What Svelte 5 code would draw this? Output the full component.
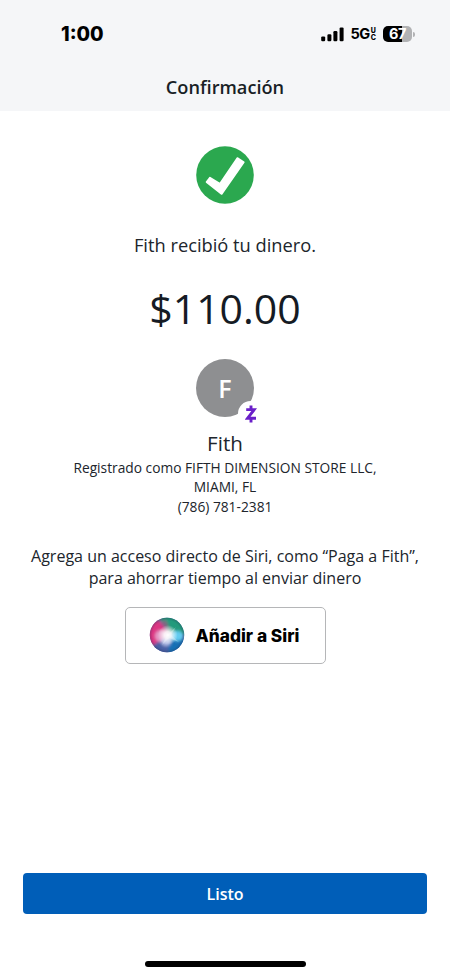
<script>
  const recipient = 'Fith';
  const amount = '$110.00';
</script>

<div class="screen">
  <header>
    <div class="status">
      <span class="time">1:00</span>
      <div class="indicators">
        <svg class="signal" width="23" height="15" viewBox="0 0 23 15" aria-hidden="true">
          <rect x="0.2" y="9.4" width="4" height="4.8" rx="1.2" />
          <rect x="6.4" y="7.2" width="4" height="7" rx="1.2" />
          <rect x="12.4" y="4" width="4" height="10.2" rx="1.2" />
          <rect x="18.6" y="0.4" width="4" height="13.8" rx="1.2" />
        </svg>
        <span class="net">5G</span>
        <span class="sub"><span>U</span><span>C</span></span>
        <div class="battery"><span>67</span></div>
        <i class="nub"></i>
      </div>
    </div>
    <h1>Confirmación</h1>
  </header>

  <main>
    <svg class="check" width="58" height="58" viewBox="0 0 58 58" aria-hidden="true">
      <circle cx="29" cy="29" r="28.8" fill="#2ba84f" />
      <path d="M10.5 36L14 31.6L23.9 37.8L41.4 12L47.8 16.2L25.7 48Z" fill="#fff" stroke="#fff" stroke-width="1.6" stroke-linejoin="round" />
    </svg>
    <p class="received"><span>{recipient} recibió tu dinero.</span></p>
    <p class="amount"><span>{amount}</span></p>

    <div class="avatar">
      <span>F</span>
      <div class="badge">
        <svg width="12" height="18" viewBox="0 0 12 18" aria-hidden="true">
          <path d="M1.2 4.6H9.2L2.6 13.2H11M6 0.5V4.4M6 13.4V17.5" fill="none" stroke="#6a1fc9" stroke-width="2.9" />
        </svg>
      </div>
    </div>
    <h2>{recipient}</h2>
    <div class="details">
      <p>Registrado como FIFTH DIMENSION STORE LLC,</p>
      <p>MIAMI, FL</p>
      <p>(786) 781-2381</p>
    </div>

    <div class="hint">
      <p>Agrega un acceso directo de Siri, como “Paga a Fith”,</p>
      <p>para ahorrar tiempo al enviar dinero</p>
    </div>

    <button class="siri">
      <svg width="36" height="36" viewBox="0 0 36 36" aria-hidden="true">
        <defs>
          <clipPath id="orb"><circle cx="18" cy="18" r="17.2" /></clipPath>
          <filter id="soft" x="-30%" y="-30%" width="160%" height="160%"><feGaussianBlur stdDeviation="1.8" /></filter>
          <radialGradient id="glow">
            <stop offset="0" stop-color="#fff" />
            <stop offset=".35" stop-color="#fff" stop-opacity=".85" />
            <stop offset="1" stop-color="#fff" stop-opacity="0" />
          </radialGradient>
          <radialGradient id="rim">
            <stop offset=".84" stop-color="#28304f" stop-opacity="0" />
            <stop offset="1" stop-color="#28304f" stop-opacity=".3" />
          </radialGradient>
        </defs>
        <g clip-path="url(#orb)">
          <rect width="36" height="36" fill="#5a6cae" />
          <g filter="url(#soft)">
            <path d="M8 -4H40V18L20 17Z" fill="#249a7b" />
            <path d="M-4 5L10 3L20 17L9 30L-4 28Z" fill="#dc3583" />
            <path d="M3 29L18 19L28 40H4Z" fill="#4960a5" />
            <path d="M19 19L40 22V40H20Z" fill="#1670b5" />
            <ellipse cx="28" cy="19" rx="6.5" ry="5" fill="#62cbf0" />
            <path d="M11 5L17 3L21 15Z" fill="#806582" />
            <ellipse cx="12" cy="19" rx="6" ry="6" fill="#e59bc8" />
            <ellipse cx="17" cy="25" rx="5" ry="4" fill="#a9b5e2" />
          </g>
          <circle cx="18.8" cy="18" r="10" fill="url(#glow)" />
          <path d="M18 18L27 10L22 18L30 25L20 21L13 28Z" fill="#fff" opacity=".28" />
          <circle cx="18" cy="18" r="17.2" fill="url(#rim)" />
        </g>
      </svg>
      <span>Añadir a Siri</span>
    </button>
  </main>

  <footer>
    <button class="done">Listo</button>
    <div class="home"></div>
  </footer>
</div>

<style>
  :global(body) { margin: 0; background: #fff; }
  .screen {
    width: 450px; height: 976px; display: flex; flex-direction: column;
    background: #fff; color: #20252c; overflow: hidden;
    font-family: "Open Sans", "Noto Sans", sans-serif;
  }
  p, h1, h2 { margin: 0; font-weight: 400; white-space: nowrap; text-align: center; }
  button { font-family: inherit; padding: 0; margin: 0; box-sizing: border-box; }
  header { height: 111px; background: #f5f6f8; flex: none; }
  .status {
    height: 68px; box-sizing: border-box; padding: 0 35px 0 61px;
    display: flex; justify-content: space-between; color: #000;
    font-family: Inter, sans-serif;
  }
  .time { font-size: 19.6px; font-weight: 800; line-height: 68px; }
  .indicators { display: flex; align-items: center; height: 68px; }
  .signal { fill: #000; margin-right: 7px; }
  .net { font-size: 14.6px; font-weight: 700; letter-spacing: -0.5px; }
  .sub { display: flex; flex-direction: column; font-size: 7px; font-weight: 800; margin: 0 7px 0 1px; }
  .sub span { display: block; height: 7px; line-height: 7px; }
  .battery {
    width: 29px; height: 16px; border-radius: 5px; flex: none;
    background: linear-gradient(90deg, #000 67%, #b1b2b4 67%);
    color: #fff; font-size: 14.5px; font-weight: 700; line-height: 16px; text-align: center; letter-spacing: -0.5px;
  }
  .nub { width: 2px; height: 5px; border-radius: 0 2px 2px 0; background: #b1b2b4; margin-left: 1px; }
  h1 { font-size: 18.2px; font-weight: 600; line-height: 24px; margin-top: 7px; color: #191f26; }
  main { flex: 1; display: flex; flex-direction: column; align-items: center; padding-top: 35px; }
  .check { display: block; flex: none; }
  .received { font-size: 18.3px; line-height: 26px; margin-top: 28px; }
  .amount { font-size: 41px; line-height: 56px; margin-top: 22px; color: #151b24; }
  .avatar {
    position: relative; width: 58px; height: 58px; border-radius: 50%; background: #8e8f91;
    margin-top: 23px; color: #fff; font-size: 25px; font-weight: 600; line-height: 58px; text-align: center; flex: none;
  }
  .badge {
    position: absolute; left: 42px; top: 42px; width: 25px; height: 25px; border-radius: 50%;
    background: #fff; display: flex; align-items: center; justify-content: center;
  }
  h2 { font-size: 20.6px; line-height: 28px; margin-top: 12px; }
  .details { font-size: 13.75px; line-height: 19.3px; margin-top: 1px; }
  .hint { font-size: 16px; line-height: 22px; margin-top: 29px; }
  .siri {
    width: 201px; height: 57px; margin-top: 18px; border: 1px solid #b5b6b8; border-radius: 5px;
    background: #fff; display: flex; align-items: center; padding-left: 23px; color: #000;
  }
  .siri span { font-family: Inter, sans-serif; font-size: 17.3px; font-weight: 800; margin-left: 11px; white-space: nowrap; }
  footer { height: 103px; flex: none; display: flex; flex-direction: column; align-items: center; }
  .done {
    width: 404px; height: 41px; border: 0; border-radius: 4px; background: #005eb8; color: #fff;
    font-size: 16px; font-weight: 600; line-height: 41px; padding-top: 1px;
  }
  .home { width: 161px; height: 6px; border-radius: 3px; background: #000; margin-top: 47px; }
</style>
